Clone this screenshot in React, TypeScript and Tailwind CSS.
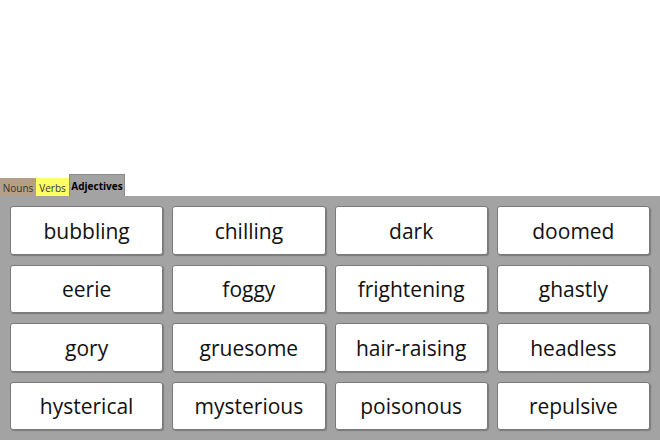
const words = [
  "bubbling",
  "chilling",
  "dark",
  "doomed",
  "eerie",
  "foggy",
  "frightening",
  "ghastly",
  "gory",
  "gruesome",
  "hair-raising",
  "headless",
  "hysterical",
  "mysterious",
  "poisonous",
  "repulsive",
];

const WordCard = ({ word }: { word: string }) => (
  <div className="flex items-center justify-center rounded-[3px] border border-[#7a7a7a] bg-white text-[21px] text-[#111] shadow-[1px_1px_1px_rgba(0,0,0,0.25)]">
    <span className="mt-[2px]">{word}</span>
  </div>
);

export default function App() {
  const tabText = "leading-none flex shrink-0 items-center justify-center pt-[1px]";

  return (
    <div
      className="flex h-[440px] w-[660px] flex-col bg-white"
      style={{ fontFamily: '"Open Sans", "Noto Sans", sans-serif' }}
    >
      <div className="flex flex-1 items-end">
        <div className={`${tabText} h-[18px] w-[36px] bg-[#b59f88] text-[10px] text-[#333]`}>
          Nouns
        </div>
        <div className={`${tabText} h-[18px] w-[33px] bg-[#ffff66] text-[10px] text-[#333]`}>
          Verbs
        </div>
        <div
          className={`${tabText} h-[22px] w-[56px] border-x border-t border-[#8a8a8a] bg-[#a3a3a3] text-[10px] font-bold text-black`}
        >
          Adjectives
        </div>
      </div>
      <div className="grid h-[244px] grid-cols-4 grid-rows-4 gap-x-[9px] gap-y-[10px] bg-[#a3a3a3] p-[10px]">
        {words.map((w) => (
          <WordCard key={w} word={w} />
        ))}
      </div>
    </div>
  );
}
